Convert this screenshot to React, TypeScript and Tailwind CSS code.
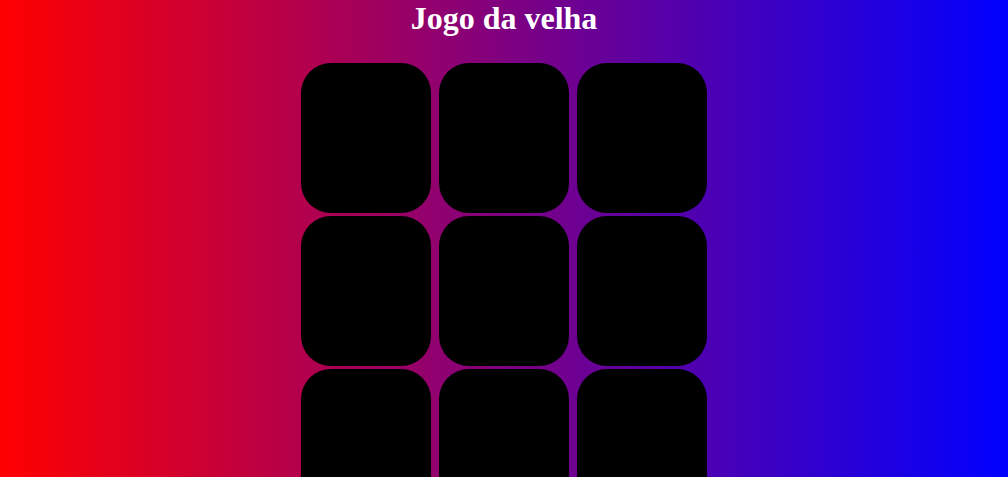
import React from 'react';

const cells = Array.from({ length: 9 }, (_, i) => i);

export default function App() {
    return (
        <div className="min-h-screen w-full bg-[linear-gradient(to_right,#ff0000,#0000ff)] overflow-hidden" style={{ fontFamily: '"Liberation Serif", "Times New Roman", serif' }}>
            {/* Title */}
            <h1 className="text-[32px] leading-[37px] font-bold text-white text-center mb-[26px]">Jogo da velha</h1>

            {/* Board */}
            <div className="grid grid-cols-[repeat(3,130px)] gap-x-2 gap-y-[3px] justify-center">
                {cells.map(i => (
                    <button key={i} className="w-[130px] h-[150px] bg-black rounded-[30px]" />
                ))}
            </div>
        </div>
    );
}
